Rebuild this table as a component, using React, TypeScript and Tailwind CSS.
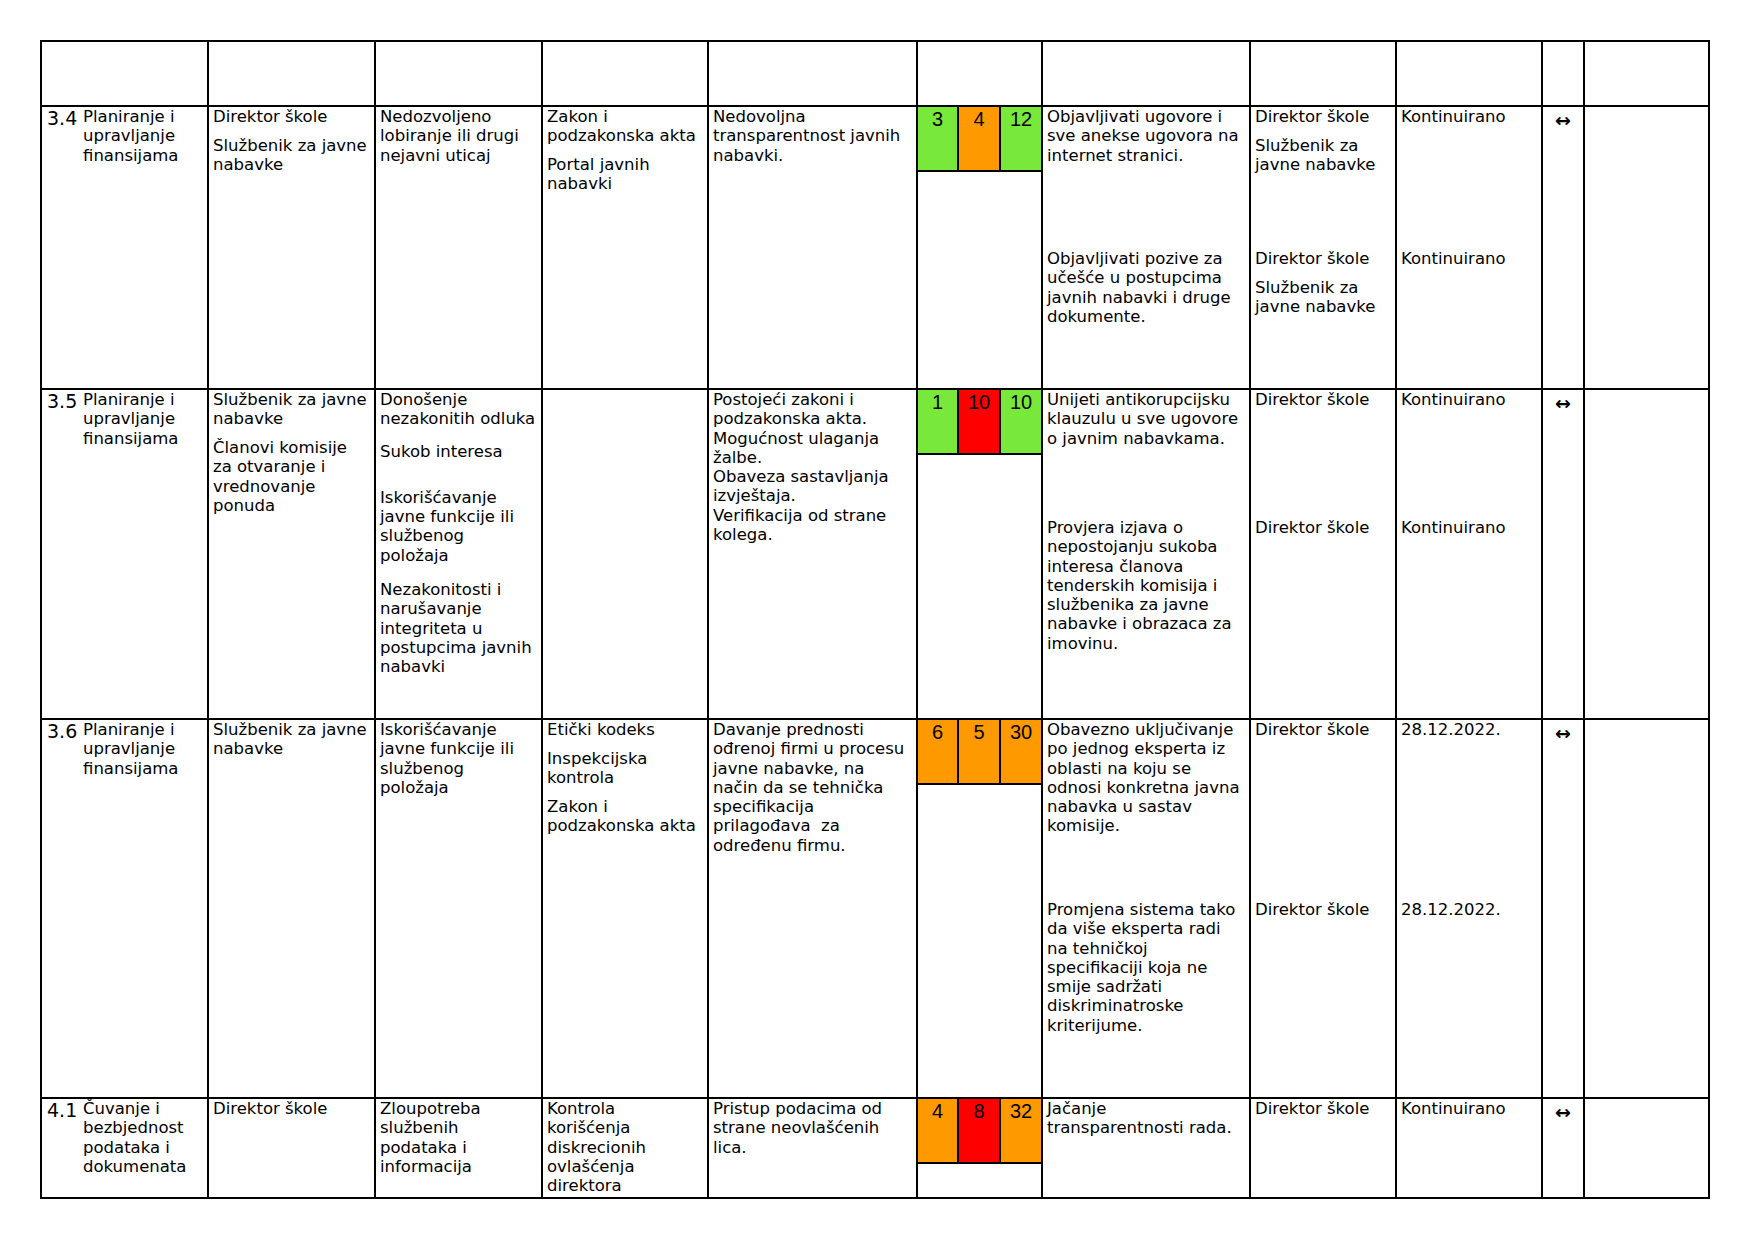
import React from 'react'

// risk register page: columns are fixed, lines are 2px black

const COLS =
  'grid grid-cols-[167px_167px_167px_166px_209px_125px_208px_146px_146px_42px_125px]'

type Para = { t: string[]; mt?: string }
type Measure = { what: Para[]; who: Para[]; when: string }
type Row = {
  no: string
  h: string
  split: string
  area: string[]
  owner: Para[]
  risk: Para[]
  controls: Para[]
  cause: Para[]
  score: [number, 'g' | 'o' | 'r'][]
  measures: Measure[]
}

const p = (...t: string[]): Para => ({ t })

const ROWS: Row[] = [
  {
    no: '3.4',
    h: 'h-[283px]',
    split: 'h-[142px]',
    area: ['Planiranje i', 'upravljanje', 'finansijama'],
    owner: [p('Direktor škole'), p('Službenik za javne', 'nabavke')],
    risk: [p('Nedozvoljeno', 'lobiranje ili drugi', 'nejavni uticaj')],
    controls: [p('Zakon i', 'podzakonska akta'), p('Portal javnih', 'nabavki')],
    cause: [p('Nedovoljna', 'transparentnost javnih', 'nabavki.')],
    score: [[3, 'g'], [4, 'o'], [12, 'g']],
    measures: [
      {
        what: [p('Objavljivati ugovore i', 'sve anekse ugovora na', 'internet stranici.')],
        who: [p('Direktor škole'), p('Službenik za', 'javne nabavke')],
        when: 'Kontinuirano',
      },
      {
        what: [p('Objavljivati pozive za', 'učešće u postupcima', 'javnih nabavki i druge', 'dokumente.')],
        who: [p('Direktor škole'), p('Službenik za', 'javne nabavke')],
        when: 'Kontinuirano',
      },
    ],
  },
  {
    no: '3.5',
    h: 'h-[330px]',
    split: 'h-[128px]',
    area: ['Planiranje i', 'upravljanje', 'finansijama'],
    owner: [p('Službenik za javne', 'nabavke'), p('Članovi komisije', 'za otvaranje i', 'vrednovanje', 'ponuda')],
    risk: [
      p('Donošenje', 'nezakonitih odluka'),
      { t: ['Sukob interesa'], mt: 'mt-[13px]' },
      { t: ['Iskorišćavanje', 'javne funkcije ili', 'službenog', 'položaja'], mt: 'mt-[27px]' },
      { t: ['Nezakonitosti i', 'narušavanje', 'integriteta u', 'postupcima javnih', 'nabavki'], mt: 'mt-[15px]' },
    ],
    controls: [],
    cause: [
      p(
        'Postojeći zakoni i',
        'podzakonska akta.',
        'Mogućnost ulaganja',
        'žalbe.',
        'Obaveza sastavljanja',
        'izvještaja.',
        'Verifikacija od strane',
        'kolega.',
      ),
    ],
    score: [[1, 'g'], [10, 'r'], [10, 'g']],
    measures: [
      {
        what: [p('Unijeti antikorupcijsku', 'klauzulu u sve ugovore', 'o javnim nabavkama.')],
        who: [p('Direktor škole')],
        when: 'Kontinuirano',
      },
      {
        what: [
          p(
            'Provjera izjava o',
            'nepostojanju sukoba',
            'interesa članova',
            'tenderskih komisija i',
            'službenika za javne',
            'nabavke i obrazaca za',
            'imovinu.',
          ),
        ],
        who: [p('Direktor škole')],
        when: 'Kontinuirano',
      },
    ],
  },
  {
    no: '3.6',
    h: 'h-[379px]',
    split: 'h-[180px]',
    area: ['Planiranje i', 'upravljanje', 'finansijama'],
    owner: [p('Službenik za javne', 'nabavke')],
    risk: [p('Iskorišćavanje', 'javne funkcije ili', 'službenog', 'položaja')],
    controls: [p('Etički kodeks'), p('Inspekcijska', 'kontrola'), p('Zakon i', 'podzakonska akta')],
    cause: [
      p(
        'Davanje prednosti',
        'ođrenoj firmi u procesu',
        'javne nabavke, na',
        'način da se tehnička',
        'specifikacija',
        'prilagođava  za',
        'određenu firmu.',
      ),
    ],
    score: [[6, 'o'], [5, 'o'], [30, 'o']],
    measures: [
      {
        what: [
          p(
            'Obavezno uključivanje',
            'po jednog eksperta iz',
            'oblasti na koju se',
            'odnosi konkretna javna',
            'nabavka u sastav',
            'komisije.',
          ),
        ],
        who: [p('Direktor škole')],
        when: '28.12.2022.',
      },
      {
        what: [
          p(
            'Promjena sistema tako',
            'da više eksperta radi',
            'na tehničkoj',
            'specifikaciji koja ne',
            'smije sadržati',
            'diskriminatroske',
            'kriterijume.',
          ),
        ],
        who: [p('Direktor škole')],
        when: '28.12.2022.',
      },
    ],
  },
  {
    no: '4.1',
    h: 'h-[100px]',
    split: '',
    area: ['Čuvanje i', 'bezbjednost', 'podataka i', 'dokumenata'],
    owner: [p('Direktor škole')],
    risk: [p('Zloupotreba', 'službenih', 'podataka i', 'informacija')],
    controls: [p('Kontrola', 'korišćenja', 'diskrecionih', 'ovlašćenja', 'direktora')],
    cause: [p('Pristup podacima od', 'strane neovlašćenih', 'lica.')],
    score: [[4, 'o'], [8, 'r'], [32, 'o']],
    measures: [
      {
        what: [p('Jačanje', 'transparentnosti rada.')],
        who: [p('Direktor škole')],
        when: 'Kontinuirano',
      },
    ],
  },
]

const SCORE_BG = { g: 'bg-[#78e83a]', o: 'bg-[#ff9900]', r: 'bg-[#ff0000]' }

function Paras({ items }: { items: Para[] }) {
  return (
    <>
      {items.map((para, i) => (
        <div key={i} className={i === 0 ? '' : para.mt ?? 'mt-[9.5px]'}>
          {para.t.map((line) => (
            <div key={line} className="whitespace-pre">
              {line}
            </div>
          ))}
        </div>
      ))}
    </>
  )
}

function Cell({ children, className = '' }: { children?: React.ReactNode; className?: string }) {
  return (
    <div className={`border-r-2 border-b-2 border-black pl-[4px] overflow-hidden ${className}`}>
      {children}
    </div>
  )
}

// cols 7-9 carry one block per measure, the second one starts lower
function Split({ row, pick }: { row: Row; pick: (m: Measure) => React.ReactNode }) {
  return (
    <Cell>
      {row.measures.map((m, i) => (
        <div key={i} className={i === 0 && row.measures.length > 1 ? row.split : ''}>
          {pick(m)}
        </div>
      ))}
    </Cell>
  )
}

function RiskRow({ row }: { row: Row }) {
  return (
    <div className={`${COLS} ${row.h}`}>
      <div className="border-r-2 border-b-2 border-black flex">
        <div className="w-[41px] shrink-0 pl-[5px] text-[19px] leading-[22px]">{row.no}</div>
        <div>
          {row.area.map((l) => (
            <div key={l} className="whitespace-pre">
              {l}
            </div>
          ))}
        </div>
      </div>
      <Cell>
        <Paras items={row.owner} />
      </Cell>
      <Cell>
        <Paras items={row.risk} />
      </Cell>
      <Cell>
        <Paras items={row.controls} />
      </Cell>
      <Cell>
        <Paras items={row.cause} />
      </Cell>
      <div className="border-r-2 border-b-2 border-black">
        <div className="grid grid-cols-[41px_42px_40px] h-[65px] border-b-2 border-black">
          {row.score.map(([n, c], i) => (
            <div
              key={i}
              className={`${SCORE_BG[c]} ${i < 2 ? 'border-r-2 border-black' : ''} text-center pt-[1px] font-['Liberation_Sans',Arial,sans-serif] text-[20px] leading-[23px]`}
            >
              {n}
            </div>
          ))}
        </div>
      </div>
      <Split row={row} pick={(m) => <Paras items={m.what} />} />
      <Split row={row} pick={(m) => <Paras items={m.who} />} />
      <Split row={row} pick={(m) => <div>{m.when}</div>} />
      <div className="border-r-2 border-b-2 border-black text-center pt-[2px] text-[19px] leading-[22px] font-bold">
        ↔
      </div>
      <Cell />
    </div>
  )
}

export default function App() {
  return (
    <div className="min-h-screen w-[1755px] bg-white pt-[40px] pl-[40px] text-black font-['DejaVu_Sans',sans-serif] text-[16.5px] leading-[19.3px]">
      <div className="w-fit border-l-2 border-t-2 border-black">
        <div className={`${COLS} h-[65px]`}>
          {Array.from({ length: 11 }).map((_, i) => (
            <div key={i} className="border-r-2 border-b-2 border-black" />
          ))}
        </div>
        {ROWS.map((r) => (
          <RiskRow key={r.no} row={r} />
        ))}
      </div>
    </div>
  )
}
